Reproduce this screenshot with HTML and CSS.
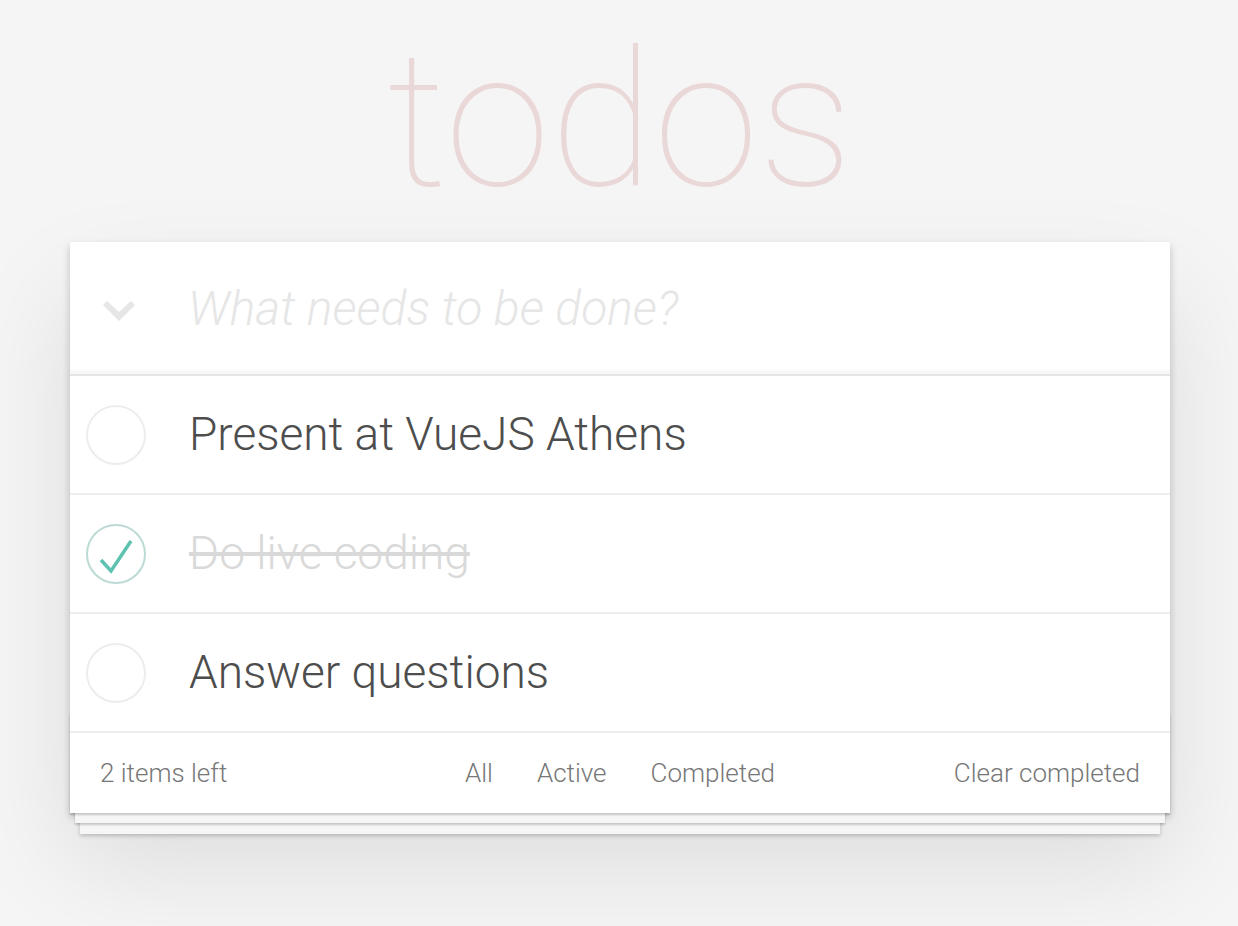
FILE: index.html
```html
<!DOCTYPE html>
<html lang="en">
<head>
<meta charset="utf-8">
<title>Vue.js • TodoMVC</title>
<link rel="stylesheet" href="styles.css">
</head>
<body>
<header class="masthead">
  <h1 class="title">todos</h1>
</header>
<section class="todoapp">
  <div class="new-row">
    <span class="toggle-all">
      <svg width="32" height="20" viewBox="0 0 32 20"><polygon points="0,4 4,0 16,11 28,0 32,4 16,20" fill="#e6e6e6"/></svg>
    </span>
    <span class="placeholder">What needs to be done?</span>
  </div>
  <ul class="todo-list">
    <li class="todo-item">
      <span class="check"><svg width="64" height="64" viewBox="0 0 64 64"><circle cx="32" cy="32" r="29" fill="none" stroke="#ededed" stroke-width="2"/></svg></span>
      <span class="label">Present at VueJS Athens</span>
    </li>
    <li class="todo-item done">
      <span class="check"><svg width="64" height="64" viewBox="0 0 64 64"><circle cx="32" cy="32" r="29" fill="none" stroke="#bddad5" stroke-width="2"/><polyline points="17,38 27,49 47,19" fill="none" stroke="#5dc2af" stroke-width="3.5"/></svg></span>
      <span class="label">Do live coding</span>
    </li>
    <li class="todo-item">
      <span class="check"><svg width="64" height="64" viewBox="0 0 64 64"><circle cx="32" cy="32" r="29" fill="none" stroke="#ededed" stroke-width="2"/></svg></span>
      <span class="label">Answer questions</span>
    </li>
  </ul>
  <footer class="footer">
    <span class="count">2 items left</span>
    <ul class="filters">
      <li><a class="filter">All</a></li>
      <li><a class="filter">Active</a></li>
      <li><a class="filter">Completed</a></li>
    </ul>
    <button class="clear">Clear completed</button>
  </footer>
</section>
</body>
</html>
```
FILE: styles.css
```css
* { box-sizing: border-box; }

html {
  background: #f5f5f5;
}

body {
  margin: 0;
  padding-left: 2px;
  min-height: 100vh;
  background: #f5f5f5;
  font-family: Roboto, "Helvetica Neue", Helvetica, Arial, sans-serif;
  font-weight: 300;
  color: #4d4d4d;
  -webkit-font-smoothing: antialiased;
}

.masthead {
  height: 242px;
  display: flex;
  justify-content: center;
}

.title {
  margin: 0;
  font-size: 190px;
  font-weight: 100;
  line-height: 240px;
  height: 242px;
  color: rgba(175, 47, 47, 0.15);
}

.todoapp {
  width: 1100px;
  margin: 0 auto 80px;
  background: #fff;
  position: relative;
  box-shadow: 0 4px 8px rgba(0, 0, 0, 0.2), 0 50px 100px rgba(0, 0, 0, 0.1);
}

.new-row {
  height: 132px;
  display: flex;
  align-items: center;
  box-shadow: inset 0 -4px 2px rgba(0, 0, 0, 0.03);
}

.toggle-all {
  width: 118px;
  padding-left: 33px;
  padding-top: 6px;
  display: flex;
}

.placeholder {
  font-size: 48px;
  font-style: italic;
  color: #e6e6e6;
}

.todo-list {
  list-style: none;
  margin: 0;
  padding: 0;
  border-top: 2px solid #e6e6e6;
}

.todo-item {
  height: 119px;
  border-bottom: 2px solid #ededed;
  display: flex;
  align-items: center;
}

.check {
  width: 119px;
  padding-left: 14px;
  display: flex;
}

.label {
  font-size: 46px;
  line-height: 1.2;
  color: #4d4d4d;
}

.done .label {
  color: #d9d9d9;
  text-decoration: line-through;
}

.footer {
  height: 80px;
  padding: 0 30px;
  display: grid;
  grid-template-columns: 1fr auto 1fr;
  align-items: center;
  font-size: 26px;
  color: #777;
  position: relative;
}

.footer::before {
  content: "";
  position: absolute;
  left: 0;
  right: 0;
  bottom: 0;
  height: 100px;
  pointer-events: none;
  box-shadow:
    0 2px 2px rgba(0, 0, 0, 0.2),
    0 15px 0 -5px #f6f6f6,
    0 17px 2px -5px rgba(0, 0, 0, 0.2),
    0 31px 0 -10px #f6f6f6,
    0 33px 4px -10px rgba(0, 0, 0, 0.2);
}

.count {
  justify-self: start;
}

.filters {
  display: flex;
  list-style: none;
  margin: 0;
  padding: 0;
}

.filter {
  display: block;
  margin: 0 6px;
  padding: 6px 14px;
  border: 2px solid transparent;
  color: inherit;
}

.clear {
  justify-self: end;
  background: none;
  border: 0;
  padding: 0;
  font: inherit;
  color: inherit;
}
```
